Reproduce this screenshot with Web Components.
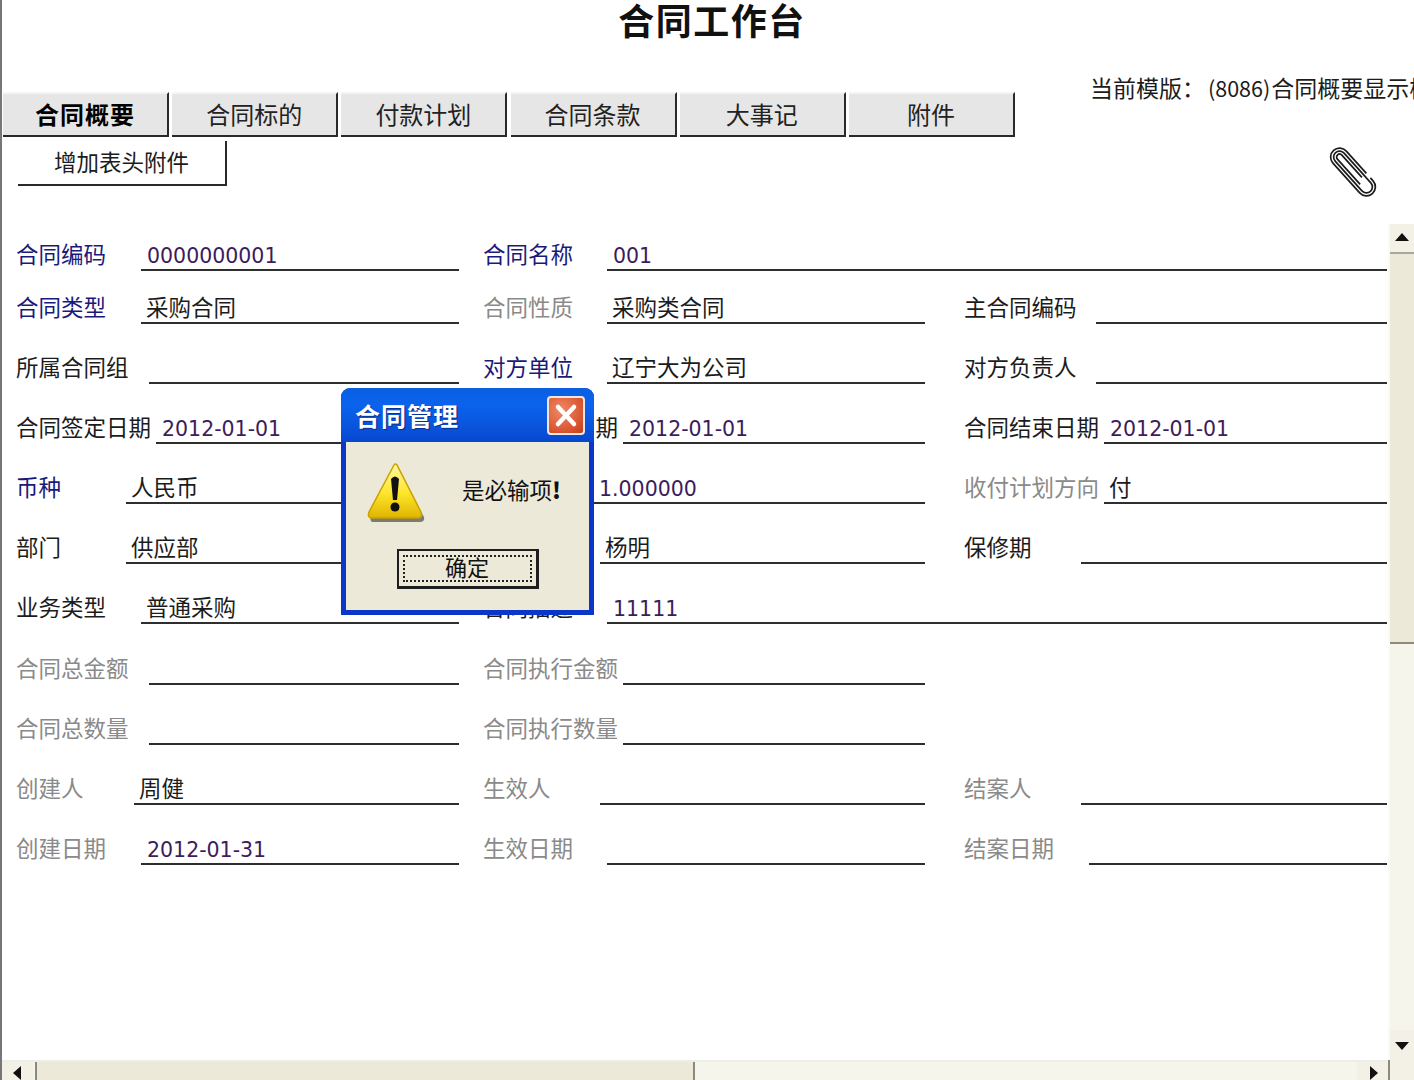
<!DOCTYPE html>
<html lang="zh">
<head>
<meta charset="utf-8">
<title>合同工作台</title>
<style>
    html, body { margin: 0; height: 100%; background: #fff; overflow: hidden; }
    body { font-family: "Liberation Sans", "Noto Sans CJK SC", sans-serif; }
</style>
</head>
<body>
<contract-page></contract-page>

<script>
const CJK = '"Noto Sans CJK SC", sans-serif';

// one tab of the top bar
class WorkTab extends HTMLElement {
    constructor() {
        super();
        this.attachShadow({ mode: 'open' });
        this.shadowRoot.innerHTML = `
<style>
    :host {
        display: flex;
        align-items: center;
        justify-content: center;
        box-sizing: border-box;
        width: 166px;
        height: 45px;
        padding-bottom: 2px;
        background: #e6e6e6;
        border-top: 2px solid #f4f4f4;
        border-right: 2px solid #2a2a2a;
        border-bottom: 2px solid #2a2a2a;
        font: 24px ${CJK};
        color: #222;
    }
    :host([active]) { font-weight: 700; color: #000; letter-spacing: 1px; }
</style>
<slot></slot>`;
    }
}

// label + underlined value
class FormField extends HTMLElement {
    constructor() {
        super();
        this.attachShadow({ mode: 'open' });
        const value = this.getAttribute('value') || '';
        const isNum = /^[0-9.\-]+$/.test(value);
        this.shadowRoot.innerHTML = `
<style>
    :host {
        display: flex;
        align-items: flex-end;
        min-width: 0;
        font: 22.5px/30px ${CJK};
        color: #1c1c1c;
    }
    :host([tone=blue]) .label { color: #1a1a7a; }
    :host([tone=gray]) .label { color: #8a8a8a; }
    .label { flex: none; white-space: nowrap; padding-bottom: 3px; width: var(--lw, 124px); }
    .value {
        flex: 1;
        min-width: 0;
        height: 30px;
        line-height: 28px;
        padding-left: 5px;
        border-bottom: 2px solid #2e2e2e;
        white-space: nowrap;
    }
    .value.num { font: 20.5px/34px "DejaVu Sans", sans-serif; padding-left: 6px; color: #3c1c5c; }
</style>
<span class="label">${this.getAttribute('label') || ''}</span>
<span class="value ${isNum ? 'num' : ''}">${value}</span>`;
        this.style.setProperty('--lw', this.getAttribute('lw') + 'px');
    }
}

// xp style scrollbar
class XpScrollbar extends HTMLElement {
    constructor() {
        super();
        this.attachShadow({ mode: 'open' });
        this.shadowRoot.innerHTML = `
<style>
    :host { display: flex; background: #f6f5ec; box-sizing: border-box; }
    :host([dir=v]) { flex-direction: column; width: 26px; border-left: 2px solid #fbfbf6; }
    :host([dir=h]) { flex-direction: row; height: 20px; border-top: 2px solid #efeee6; }
    .btn { flex: none; display: flex; align-items: center; justify-content: center; background: #f3f1e6; }
    :host([dir=v]) .btn { height: 28px; }
    :host([dir=v]) .btn:last-child { height: 30px; }
    :host([dir=h]) .btn { width: 31px; padding-top: 3px; box-sizing: border-box; }
    :host([dir=h]) .btn:first-child { padding-right: 4px; }
    .thumb { flex: none; background: #ece9d8; }
    :host([dir=v]) .thumb { height: 388px; border-bottom: 2px solid #8c8a7c; border-top: 2px solid #a9a79a; }
    :host([dir=h]) .thumb { width: 656px; margin-left: 2px; border-left: 2px solid #8c8a7c; border-right: 2px solid #8c8a7c; }
    .track { flex: 1; }
    svg { display: block; }
</style>
<div class="btn"><svg width="16" height="16" viewBox="0 0 16 16"><path id="a" fill="#111"/></svg></div>
<div class="thumb"></div>
<div class="track"></div>
<div class="btn"><svg width="16" height="16" viewBox="0 0 16 16"><path id="b" fill="#111"/></svg></div>`;
        const vertical = this.getAttribute('dir') === 'v';
        this.shadowRoot.querySelector('#a').setAttribute('d', vertical ? 'M8 3 L15 11 H1 Z' : 'M3 8 L11 1 V15 Z');
        this.shadowRoot.querySelector('#b').setAttribute('d', vertical ? 'M8 13 L1 5 H15 Z' : 'M13 8 L5 1 V15 Z');
    }
}

// the modal message box
class MsgDialog extends HTMLElement {
    constructor() {
        super();
        this.attachShadow({ mode: 'open' });
        this.shadowRoot.innerHTML = `
<style>
    :host {
        position: absolute;
        left: 339px;
        top: 388px;
        width: 253px;
        height: 227px;
        box-sizing: border-box;
        display: flex;
        flex-direction: column;
        border-radius: 9px 9px 0 0;
        background: #0a37c8;
        padding: 0 5px 5px 5px;
        font-family: ${CJK};
    }
    .title {
        flex: none;
        height: 54px;
        margin: 0 -5px;
        padding: 0 9px 0 14px;
        display: flex;
        align-items: center;
        justify-content: space-between;
        border-radius: 9px 9px 0 0;
        background: linear-gradient(#0b5fe0 0, #0a63ee 30%, #0a55dc 70%, #0746cf 100%);
        color: #fff;
        font-size: 25px;
        font-weight: 700;
        letter-spacing: 1px;
        text-shadow: 1px 1px 1px #0b2c8c;
    }
    .close {
        width: 38px;
        height: 39px;
        box-sizing: border-box;
        border: 2px solid #f2e6e0;
        border-radius: 4px;
        background: radial-gradient(circle at 35% 35%, #ef8a66, #d9532f 70%, #c43c1c);
    }
    .close svg { display: block; }
    .body {
        flex: 1;
        background: #ece9d8;
        display: flex;
        flex-direction: column;
        align-items: center;
    }
    .msg {
        display: flex;
        align-items: center;
        width: 100%;
        box-sizing: border-box;
        padding: 20px 0 0 20px;
        gap: 36px;
        font-size: 22.5px;
        line-height: 30px;
        color: #111;
    }
    .msg svg { flex: none; display: block; }
    .msg span { margin-top: -9px; }
    .msg b { font-weight: 900; }
    button {
        margin: 25px 0 0;
        width: 142px;
        height: 40px;
        padding: 4px;
        border: 2px solid #1e1e1e;
        border-right-width: 3px;
        border-bottom-width: 3px;
        background: #ece9d8;
        font: 22px/24px ${CJK};
        color: #111;
    }
    button span {
        display: block;
        height: 100%;
        box-sizing: border-box;
        border: 2px dotted #222;
        line-height: 19px;
        margin-top: -1px;
    }
</style>
<div class="title">
    <span>合同管理</span>
    <div class="close">
        <svg width="34" height="35" viewBox="0 0 34 35"><path d="M9 9 L25 26 M25 9 L9 26" stroke="#fff" stroke-width="4.5" stroke-linecap="round"/></svg>
    </div>
</div>
<div class="body">
    <div class="msg">
        <svg width="60" height="62" viewBox="0 0 60 62">
            <defs>
                <linearGradient id="warn" x1="0" y1="0" x2="0" y2="1">
                    <stop offset="0" stop-color="#fff8a0"/>
                    <stop offset=".55" stop-color="#fde52a"/>
                    <stop offset="1" stop-color="#e0b400"/>
                </linearGradient>
            </defs>
            <path d="M31 6 L58 55 Q59 60 54 60 H8 Q3 60 5 55 Z" fill="#555" opacity=".75"/>
            <path d="M28 3 Q29 1 31 3 L55 50 Q57 56 52 56 H6 Q1 56 3 50 Z" fill="url(#warn)" stroke="#c9a100" stroke-width="1.5"/>
            <path d="M25 17 Q29 12 33 17 L31 38 H27 Z" fill="#111"/>
            <circle cx="29" cy="45" r="4.5" fill="#111"/>
        </svg>
        <span>是必输项<b>!</b></span>
    </div>
    <button><span>确定</span></button>
</div>`;
    }
}

class ContractPage extends HTMLElement {
    constructor() {
        super();
        this.attachShadow({ mode: 'open' });
        this.shadowRoot.innerHTML = `
<style>
    :host {
        display: flex;
        flex-direction: column;
        position: relative;
        box-sizing: border-box;
        width: 1414px;
        height: 1080px;
        overflow: hidden;
        border-left: 2px solid #777;
        font-family: ${CJK};
        color: #1c1c1c;
    }
    h1 {
        flex: none;
        margin: 0;
        height: 42px;
        padding-left: 8px;
        text-align: center;
        font-size: 36px;
        line-height: 38px;
        font-weight: 700;
        letter-spacing: 1.5px;
        color: #111;
    }
    .head {
        flex: none;
        display: flex;
        height: 87px;
        margin-top: 8px;
    }
    .tabs { display: flex; gap: 3.2px; margin: 42px 0 0 1px; }
    .tpl {
        flex: 1;
        min-width: 0;
        margin: 23px 0 0 75px;
        font-size: 23px;
        line-height: 28px;
        white-space: nowrap;
        overflow: hidden;
    }
    .tpl span { font-size: 21.5px; margin: 0 1px 0 3px; }
    .tools {
        flex: none;
        height: 87px;
        display: flex;
        justify-content: space-between;
        padding: 4px 34px 0 16px;
        box-sizing: border-box;
    }
    .add {
        width: 209px;
        height: 45px;
        box-sizing: border-box;
        border-right: 2px solid #2a2a2a;
        border-bottom: 2px solid #2a2a2a;
        text-align: center;
        font-size: 22.5px;
        line-height: 41px;
    }
    .clip { display: block; margin-top: 4px; }
    .main { flex: 1; min-height: 0; display: flex; }
    .form {
        flex: 1;
        min-width: 0;
        display: grid;
        grid-template-columns: 443px 24px 442px 39px 423px;
        grid-template-rows: 47px 53px repeat(5, 60px) 61px;
        grid-auto-rows: 60px;
        padding-left: 14px;
        align-items: end;
    }
    form-field.c1 { grid-column: 1; }
    form-field.c2 { grid-column: 3; }
    form-field.c2[wide] { grid-column: 3 / 6; }
    form-field.c3 { grid-column: 5; }
    .bottom { flex: none; display: flex; }
    .bottom xp-scrollbar { flex: 1; }
    .corner { flex: none; width: 26px; background: #f3f1e6; border-left: 2px solid #8c8a7c; box-sizing: border-box; }
</style>

<h1>合同工作台</h1>
<div class="head">
    <div class="tabs">
        <work-tab active>合同概要</work-tab>
        <work-tab>合同标的</work-tab>
        <work-tab>付款计划</work-tab>
        <work-tab>合同条款</work-tab>
        <work-tab>大事记</work-tab>
        <work-tab>附件</work-tab>
    </div>
    <div class="tpl">当前模版：<span>(8086)</span>合同概要显示模板</div>
</div>
<div class="tools">
    <div class="add">增加表头附件</div>
    <svg class="clip" width="52" height="56" viewBox="0 0 52 56">
        <g transform="translate(25 27) rotate(48)" fill="none" stroke="#1c1c1c" stroke-width="1.7">
            <path d="M10 -9 H-20 A9 9 0 0 0 -20 9 H20 A9 9 0 0 0 20 -9 H16"/>
            <path d="M13 -6 H-20 A6 6 0 0 0 -20 6 H20 A6 6 0 0 0 20 -6 H6"/>
            <path d="M10 -3 H-20 A3 3 0 0 0 -20 3 H14"/>
        </g>
    </svg>
</div>
<div class="main">
    <div class="form">
        <form-field class="c1" label="合同编码" tone="blue" lw="125" value="0000000001"></form-field>
        <form-field class="c2" wide label="合同名称" tone="blue" lw="124" value="001"></form-field>

        <form-field class="c1" label="合同类型" tone="blue" lw="125" value="采购合同"></form-field>
        <form-field class="c2" label="合同性质" tone="gray" lw="124" value="采购类合同"></form-field>
        <form-field class="c3" label="主合同编码" lw="132"></form-field>

        <form-field class="c1" label="所属合同组" lw="133"></form-field>
        <form-field class="c2" label="对方单位" tone="blue" lw="124" value="辽宁大为公司"></form-field>
        <form-field class="c3" label="对方负责人" lw="132"></form-field>

        <form-field class="c1" label="合同签定日期" lw="140" value="2012-01-01"></form-field>
        <form-field class="c2" label="合同开始日期" lw="140" value="2012-01-01"></form-field>
        <form-field class="c3" label="合同结束日期" lw="140" value="2012-01-01"></form-field>

        <form-field class="c1" label="币种" tone="blue" lw="110" value="人民币"></form-field>
        <form-field class="c2" lw="110" value="1.000000"></form-field>
        <form-field class="c3" label="收付计划方向" tone="gray" lw="140" value="付"></form-field>

        <form-field class="c1" label="部门" lw="110" value="供应部"></form-field>
        <form-field class="c2" lw="117" value="杨明"></form-field>
        <form-field class="c3" label="保修期" lw="117"></form-field>

        <form-field class="c1" label="业务类型" lw="125" value="普通采购"></form-field>
        <form-field class="c2" wide label="合同描述" lw="124" value="11111"></form-field>

        <form-field class="c1" label="合同总金额" tone="gray" lw="133"></form-field>
        <form-field class="c2" label="合同执行金额" tone="gray" lw="140"></form-field>

        <form-field class="c1" label="合同总数量" tone="gray" lw="133"></form-field>
        <form-field class="c2" label="合同执行数量" tone="gray" lw="140"></form-field>

        <form-field class="c1" label="创建人" tone="gray" lw="118" value="周健"></form-field>
        <form-field class="c2" label="生效人" tone="gray" lw="117"></form-field>
        <form-field class="c3" label="结案人" tone="gray" lw="117"></form-field>

        <form-field class="c1" label="创建日期" tone="gray" lw="125" value="2012-01-31"></form-field>
        <form-field class="c2" label="生效日期" tone="gray" lw="124"></form-field>
        <form-field class="c3" label="结案日期" tone="gray" lw="125"></form-field>
    </div>
    <xp-scrollbar dir="v"></xp-scrollbar>
</div>
<div class="bottom">
    <xp-scrollbar dir="h"></xp-scrollbar>
    <div class="corner"></div>
</div>
<msg-dialog></msg-dialog>`;
    }
}

customElements.define('work-tab', WorkTab);
customElements.define('form-field', FormField);
customElements.define('xp-scrollbar', XpScrollbar);
customElements.define('msg-dialog', MsgDialog);
customElements.define('contract-page', ContractPage);
</script>
</body>
</html>
